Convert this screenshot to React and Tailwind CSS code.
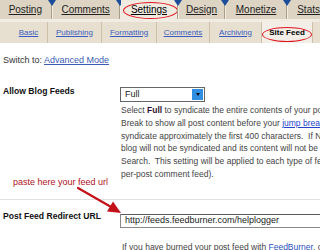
export default function App() {
  const Sep = ({ marker = true }) => (
    <div className="relative w-[2px] h-full border-l border-[#a99c86] bg-[#f3eee4]">
      {marker && (
        <div className="absolute left-[-4px] top-0 w-0 h-0 border-l-[4px] border-r-[4px] border-t-[6px] border-l-transparent border-r-transparent border-t-[#1d4c9a]" />
      )}
    </div>
  );
  const SubSep = () => <div className="w-[1px] h-full bg-[#cdbfa8]" />;
  const Tab = ({ w, children, active }) => (
    <div
      className={`${w} relative flex items-center justify-center underline ${
        active ? "bg-[#f0ebe1] text-black" : "text-[#222]"
      }`}
    >
      {children}
    </div>
  );
  const Sub = ({ w, children, active }) => (
    <div
      className={`${w} relative flex items-center justify-center ${
        active ? "bg-[#f3efe8] font-bold text-black" : "underline text-[#3a5cc0]"
      }`}
    >
      {children}
    </div>
  );

  return (
    <div className="relative w-[320px] h-[250px] overflow-hidden bg-white font-['Liberation_Sans',Arial,sans-serif]">
      {/* Top tabs */}
      <div className="flex h-[19px] bg-[#ddd4c3] text-[10px] leading-none whitespace-nowrap">
        <Tab w="w-[52px]">Posting</Tab>
        <Sep />
        <Tab w="w-[68px]">Comments</Tab>
        <Sep />
        <Tab w="w-[58px]" active>
          Settings
          <div className="absolute left-[2px] top-[2px] w-[55px] h-[17px] rounded-[50%] border border-[#e0141e]" />
        </Tab>
        <Sep />
        <Tab w="w-[46px]">Design</Tab>
        <Sep />
        <Tab w="w-[62px]">Monetize</Tab>
        <Sep />
        <div className="flex items-center pl-[9px] underline text-[#222]">Stats</div>
      </div>
      <div className="h-[3px] bg-[#f2ede4]" />
      {/* Sub tabs */}
      <div className="flex h-[21px] bg-[#e7e0d1] text-[8px] leading-none whitespace-nowrap">
        <div className="w-[10px]" />
        <Sub w="w-[37px]">Basic</Sub>
        <SubSep />
        <Sub w="w-[53px]">Publishing</Sub>
        <SubSep />
        <Sub w="w-[54px]">Formatting</Sub>
        <SubSep />
        <Sub w="w-[52px]">Comments</Sub>
        <SubSep />
        <Sub w="w-[51px]">Archiving</Sub>
        <SubSep />
        <Sub w="w-[50px]" active>
          Site Feed
          <div className="absolute left-[0px] top-[5px] w-[50px] h-[15px] rounded-[50%] border border-[#e0141e]" />
        </Sub>
        <SubSep />
      </div>

      {/* Content */}
      <div className="pt-[11px] pl-[3px] text-[9px] leading-[12px] text-[#333] whitespace-nowrap">
        Switch to: <span className="text-[#3c5cb4] underline">Advanced Mode</span>
      </div>

      <div className="flex mt-[19px]">
        <div className="w-[120px] shrink-0 flex flex-col justify-between">
          <div className="pl-[3px] text-[8.6px] leading-[12px] font-bold text-[#111] whitespace-nowrap">
            Allow Blog Feeds
          </div>
          <div className="pl-[13px] text-[9px] leading-[12px] text-[#b0101c] whitespace-nowrap">
            paste here your feed url
          </div>
        </div>
        <div className="flex-1 pt-[2px] pb-[7px] min-w-0">
          <div className="flex w-[85px] h-[15px] items-center border border-[#666] bg-white">
            <div className="flex-1 pl-[4px] text-[9px] text-[#222] leading-none">Full</div>
            <div className="w-[11px] h-[11px] mr-[1px] bg-[#2f8de2] flex items-center justify-center">
              <div className="w-0 h-0 border-l-[2px] border-r-[2px] border-t-[3px] border-l-transparent border-r-transparent border-t-[#111]" />
            </div>
          </div>
          <div className="mt-[2px] pl-[1px] text-[8.5px] leading-[12.8px] text-[#444] whitespace-nowrap">
            <div>
              Select <b className="text-[#301030]">Full</b> to syndicate the entire contents of your post. Choose Until Jump
            </div>
            <div>
              Break to show all post content before your <span className="text-[#2244cc] underline">jump break</span>. Choose Short to
            </div>
            <div>syndicate approximately the first 400 characters.&nbsp; If None is selected, your</div>
            <div>blog will not be syndicated and its content will not be indexed by Blog</div>
            <div>Search.&nbsp; This setting will be applied to each type of feed (blog posts, comments, and</div>
            <div>per-post comment feed).</div>
          </div>
        </div>
      </div>

      <div className="mt-[11px] h-[1px] bg-[#e2e2e2]" />

      <div className="flex">
        <div className="w-[120px] shrink-0 pt-[10px] pl-[3px] text-[8.6px] leading-[12px] font-bold text-[#111] whitespace-nowrap">
          Post Feed Redirect URL
        </div>
        <div className="flex-1 pt-[14px] min-w-0">
          <div className="h-[14px] w-[220px] border border-[#8a8a8a] border-t-[#5a5a5a] bg-white pl-[4px] flex items-center text-[9px] leading-none text-[#222] whitespace-nowrap">
            http://feeds.feedburner.com/helplogger
          </div>
          <div className="mt-[13px] pl-[2px] text-[8.5px] leading-[12px] text-[#444] whitespace-nowrap">
            If you have burned your post feed with <span className="text-[#2a50c0] underline">FeedBurner</span>, or used
          </div>
        </div>
      </div>

      {/* Annotation arrow */}
      <svg className="absolute left-0 top-0 pointer-events-none" width="320" height="250" viewBox="0 0 320 250">
        <line x1="78" y1="188" x2="112" y2="207.5" stroke="#c4121a" strokeWidth="2.2" strokeLinecap="round" />
        <polygon points="121,213 107,211.5 113,201.5" fill="#c4121a" />
      </svg>
    </div>
  );
}
